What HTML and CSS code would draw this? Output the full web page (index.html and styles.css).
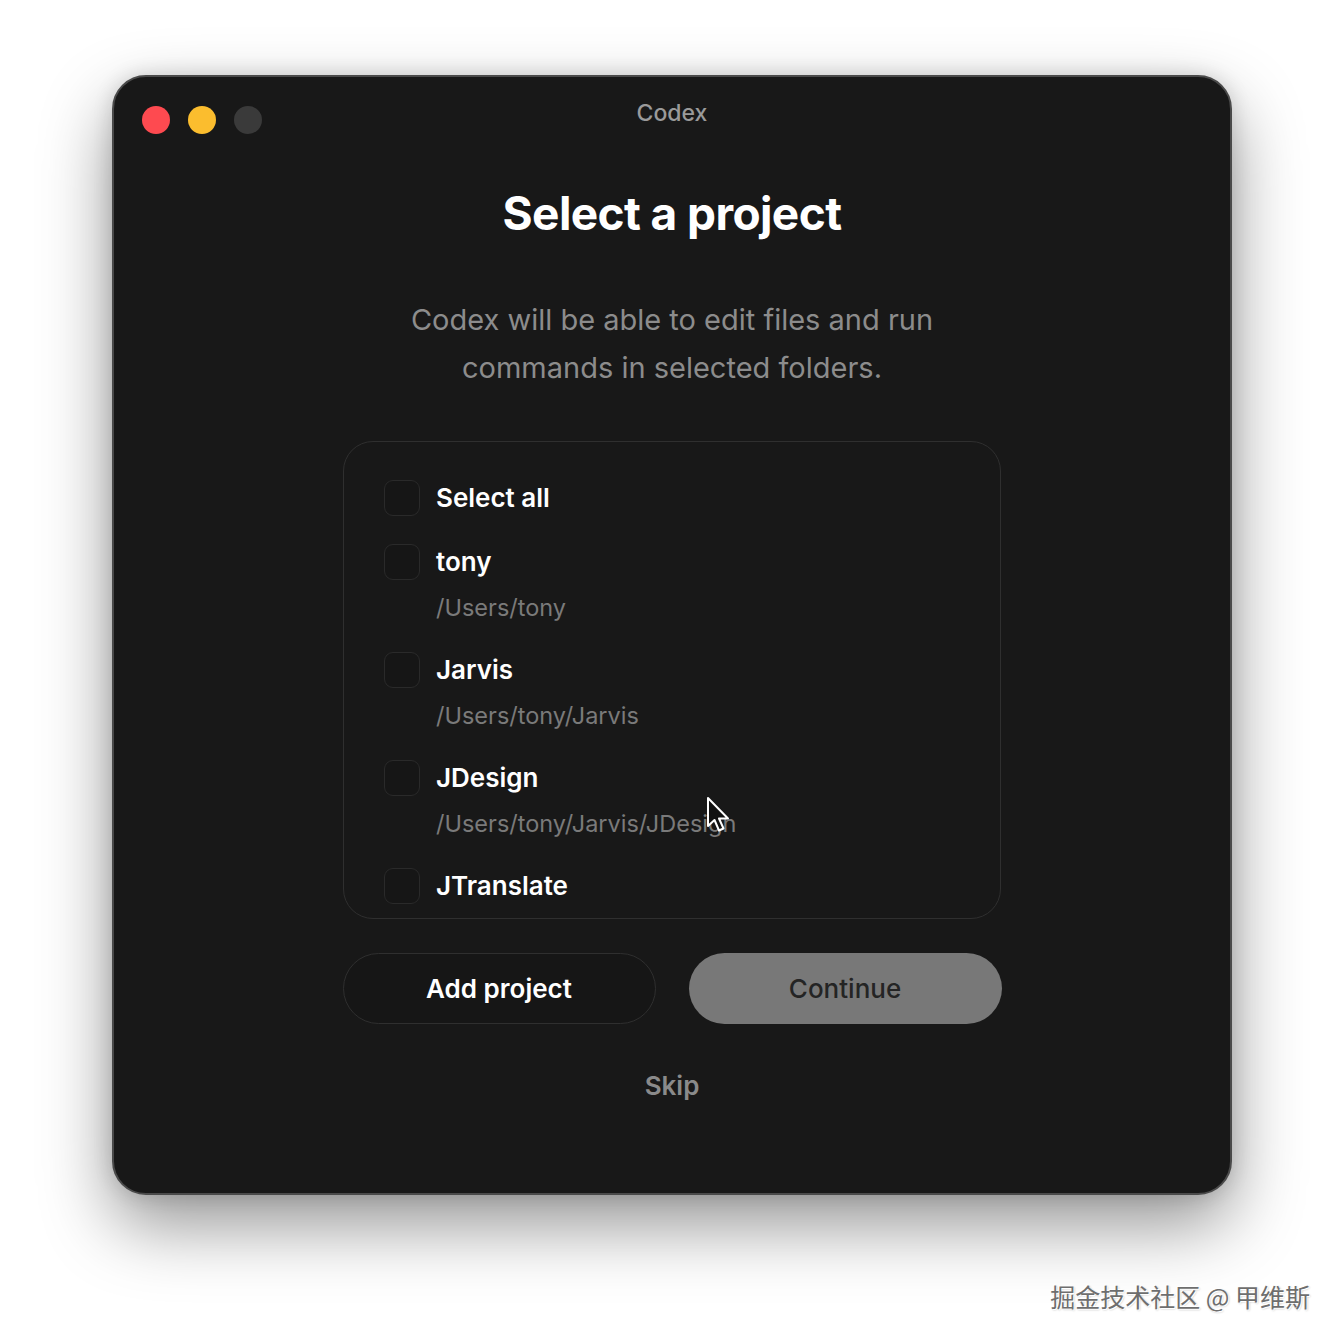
FILE: index.html
```html
<!DOCTYPE html>
<html lang="en">

<head>
  <meta charset="UTF-8">
  <title>Codex - Select a project</title>
  <link rel="stylesheet" href="styles.css">
</head>

<body>
  <div class="window">
    <div class="titlebar">
      <div class="lights">
        <span class="light red"></span>
        <span class="light yellow"></span>
        <span class="light gray"></span>
      </div>
      <div class="title">Codex</div>
      <div></div>
    </div>

    <div class="content">
      <h1 class="heading">Select a project</h1>
      <p class="intro">Codex will be able to edit files and run<br>commands in selected folders.</p>

      <div class="list">
        <label class="item">
          <span class="check"></span>
          <span class="name">Select all</span>
        </label>
        <label class="item">
          <span class="check"></span>
          <span class="name">tony</span>
          <span class="path">/Users/tony</span>
        </label>
        <label class="item">
          <span class="check"></span>
          <span class="name">Jarvis</span>
          <span class="path">/Users/tony/Jarvis</span>
        </label>
        <label class="item">
          <span class="check"></span>
          <span class="name">JDesign</span>
          <span class="path">/Users/tony/Jarvis/JDesign</span>
        </label>
        <label class="item">
          <span class="check"></span>
          <span class="name">JTranslate</span>
        </label>
      </div>

      <div class="actions">
        <button class="btn btn-outline">Add project</button>
        <button class="btn btn-fill">Continue</button>
      </div>

      <a href="#" class="skip">Skip</a>
    </div>

    <svg class="cursor" width="26" height="38" viewBox="0 0 26 38">
      <path d="M2 2 L2 30 L8.5 24 L13 34.5 L17.5 32.5 L13 22.5 L22 22.5 Z" fill="#111" stroke="#fff" stroke-width="2" stroke-linejoin="round"/>
    </svg>
  </div>

  <div class="watermark">掘金技术社区 @ 甲维斯</div>
</body>

</html>
```

FILE: styles.css
```css
html,
body {
  margin: 0;
  padding: 0;
}

body {
  position: relative;
  width: 1344px;
  height: 1344px;
  background: #ffffff;
  font-family: Inter, "Noto Sans", sans-serif;
  overflow: hidden;
}

.window {
  position: relative;
  box-sizing: border-box;
  width: 1120px;
  height: 1120px;
  margin: 75px auto 0;
  background: #181818;
  border: 2px solid #4a4a4a;
  border-radius: 34px;
  box-shadow: 0 30px 70px rgba(0, 0, 0, 0.42), 0 0 20px rgba(0, 0, 0, 0.14);
}

.titlebar {
  display: grid;
  grid-template-columns: 1fr auto 1fr;
  align-items: start;
  height: 108px;
}

.lights {
  display: flex;
  gap: 18px;
  padding: 29px 0 0 28px;
}

.light {
  display: block;
  width: 28px;
  height: 28px;
  border-radius: 50%;
}

.light.red {
  background-color: #fe4a50;
}

.light.yellow {
  background-color: #fbbd2e;
}

.light.gray {
  background-color: #3a3a3a;
}

.title {
  padding-top: 21px;
  color: #9a9a9a;
  font-size: 23px;
  font-weight: 500;
  line-height: 30px;
}

.content {
  display: flex;
  flex-direction: column;
  align-items: center;
}

.heading {
  margin: 0;
  color: #ffffff;
  font-size: 46px;
  font-weight: 700;
  letter-spacing: -0.6px;
  line-height: 56px;
}

.intro {
  margin: 55px 0 0;
  color: #8c8c8c;
  font-size: 29px;
  line-height: 48px;
  text-align: center;
}

.list {
  box-sizing: border-box;
  width: 658px;
  height: 478px;
  margin-top: 49px;
  padding: 38px 40px 0;
  border: 1.5px solid #2f2f2f;
  border-radius: 30px;
  overflow: hidden;
}

.item {
  display: grid;
  grid-template-columns: 36px 1fr;
  column-gap: 16px;
  align-items: center;
  margin-bottom: 28px;
}

.item .check {
  box-sizing: border-box;
  width: 36px;
  height: 36px;
  border: 1.5px solid #2a2a2a;
  border-radius: 9px;
  background: #161616;
}

.item .name {
  color: #ffffff;
  font-size: 26px;
  font-weight: 600;
  line-height: 36px;
}

.item .path {
  grid-column: 2;
  margin: 10px 0 -2px;
  color: #7a7a7a;
  font-size: 23.5px;
  line-height: 36px;
}

.actions {
  display: flex;
  gap: 33px;
  margin-top: 34px;
}

.btn {
  box-sizing: border-box;
  width: 313px;
  height: 71px;
  border-radius: 36px;
  font-family: Inter, "Noto Sans", sans-serif;
  font-size: 26px;
  font-weight: 600;
}

.btn-outline {
  border: 1.5px solid #2f2f2f;
  background: #161616;
  color: #ffffff;
}

.btn-fill {
  border: 0;
  background: #787878;
  color: #242424;
  font-weight: 500;
}

.skip {
  margin-top: 44px;
  color: #8a8a8a;
  font-size: 26px;
  font-weight: 600;
  line-height: 36px;
  text-decoration: none;
}

.cursor {
  position: absolute;
  left: 592px;
  top: 719px;
}

.watermark {
  position: absolute;
  right: 34px;
  bottom: 30px;
  color: #6e6e6e;
  font-family: "Noto Sans CJK SC", sans-serif;
  font-size: 25px;
  text-shadow: 1px 1px 0 #ffffff, -1px -1px 0 #ffffff, 1px 1px 2px rgba(0, 0, 0, 0.3);
}
```
